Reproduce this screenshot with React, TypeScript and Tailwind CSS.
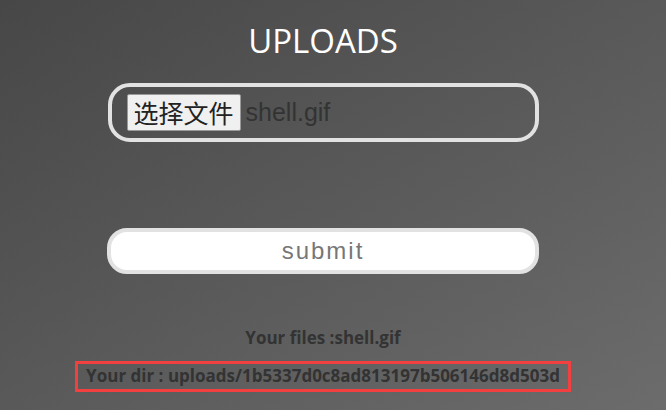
import React from 'react';

const App: React.FC = () => {
  return (
    <div className="w-[666px] h-[410px] overflow-hidden bg-gradient-to-br from-[#474747] to-[#6c6c6c] font-['Open_Sans',sans-serif]">
      <div className="w-[646px] flex flex-col items-center">
        {/* Title */}
        <h1 className="mt-[19px] text-[33px] leading-[44px] text-white">UPLOADS</h1>

        {/* File picker */}
        <div className="mt-[20px] w-[431px] h-[59px] rounded-[22px] border-4 border-[#e2e2e2] flex items-center pl-[15px]">
          <span className="h-[37px] px-[6px] flex items-center bg-[#f0f0f0] border border-[#9a9a9a] rounded-[2px] text-[25px] text-[#222] font-['Noto_Sans_CJK_SC',sans-serif]">
            选择文件
          </span>
          <span className="ml-[5px] text-[25px] text-[#333] font-['Liberation_Sans',sans-serif]">shell.gif</span>
        </div>

        {/* Submit */}
        <button className="mt-[86px] w-[432px] h-[46px] rounded-[20px] border-4 border-[#e2e2e2] bg-white text-[24px] tracking-[2px] text-[#777] font-['Liberation_Sans',sans-serif] flex items-center justify-center">
          submit
        </button>

        {/* Result */}
        <p className="mt-[51px] text-[17px] font-bold text-[#333]">Your files :shell.gif</p>
        <div className="mt-[10px] w-[496px] h-[31px] border-[3px] border-[#f23f3f] flex items-center justify-center">
          <span className="text-[17px] font-bold text-[#333]">Your dir : uploads/1b5337d0c8ad813197b506146d8d503d</span>
        </div>
      </div>
    </div>
  );
};

export default App;
